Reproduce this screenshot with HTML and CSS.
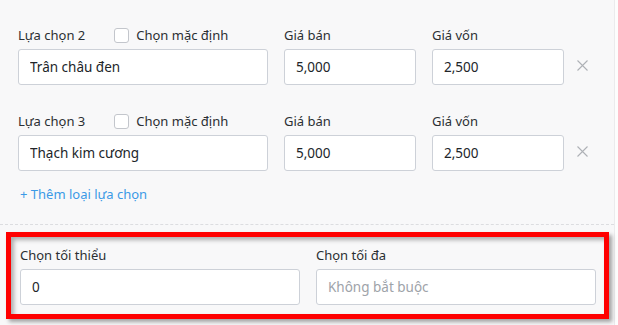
FILE: index.html
```html
<!DOCTYPE html>
<html lang="vi">
<head>
  <meta charset="UTF-8" />
  <meta name="viewport" content="width=device-width, initial-scale=1.0"/>
  <title>Lựa chọn</title>
  <link rel="stylesheet" href="styles.css">
</head>
<body>
  <div class="panel">

    <div class="option-row">
      <div class="field name-field">
        <div class="label-line">
          <label>Lựa chọn 2</label>
          <label class="check"><span class="box"></span>Chọn mặc định</label>
        </div>
        <input type="text" value="Trân châu đen" />
      </div>
      <div class="field">
        <div class="label-line"><label>Giá bán</label></div>
        <input type="text" value="5,000" />
      </div>
      <div class="field">
        <div class="label-line"><label>Giá vốn</label></div>
        <input type="text" value="2,500" />
      </div>
      <button class="remove" title="Xoá">
        <svg width="11" height="11" viewBox="0 0 11 11"><path d="M0.5 0.5 L10.5 10.5 M10.5 0.5 L0.5 10.5" stroke="#aeb1b6" stroke-width="1.1" fill="none"/></svg>
      </button>
    </div>

    <div class="option-row">
      <div class="field name-field">
        <div class="label-line">
          <label>Lựa chọn 3</label>
          <label class="check"><span class="box"></span>Chọn mặc định</label>
        </div>
        <input type="text" value="Thạch kim cương" />
      </div>
      <div class="field">
        <div class="label-line"><label>Giá bán</label></div>
        <input type="text" value="5,000" />
      </div>
      <div class="field">
        <div class="label-line"><label>Giá vốn</label></div>
        <input type="text" value="2,500" />
      </div>
      <button class="remove" title="Xoá">
        <svg width="11" height="11" viewBox="0 0 11 11"><path d="M0.5 0.5 L10.5 10.5 M10.5 0.5 L0.5 10.5" stroke="#aeb1b6" stroke-width="1.1" fill="none"/></svg>
      </button>
    </div>

    <a class="add-link" href="#">+ Thêm loại lựa chọn</a>

    <hr class="divider" />

    <div class="limits">
      <div class="field">
        <div class="label-line"><label>Chọn tối thiểu</label></div>
        <input type="text" value="0" />
      </div>
      <div class="field">
        <div class="label-line"><label>Chọn tối đa</label></div>
        <input type="text" placeholder="Không bắt buộc" />
      </div>
    </div>

  </div>
</body>
</html>
```

FILE: styles.css
```css
body {
  margin: 0;
  background: #fdfdfd;
  font-family: "Noto Sans", "Open Sans", sans-serif;
  font-size: 13px;
  color: #212529;
}

.panel {
  width: 615px;
  height: 325px;
  box-sizing: border-box;
  background: #f8f8f9;
  border-right: 1px solid #ebebed;
  padding-top: 25px;
}

.option-row {
  display: flex;
  align-items: flex-start;
  gap: 16px;
  padding-left: 18px;
  margin-bottom: 26px;
}

.field {
  display: flex;
  flex-direction: column;
  width: 132px;
}

.name-field {
  width: 250px;
}

.label-line {
  display: flex;
  align-items: center;
  height: 20px;
  margin-bottom: 4px;
  white-space: nowrap;
}

.label-line label {
  color: #2b2f33;
}

.check {
  display: flex;
  align-items: center;
  margin-left: 29px;
}

.box {
  display: inline-block;
  width: 13px;
  height: 13px;
  border: 1px solid #c3c6cc;
  border-radius: 3px;
  background: #fff;
  margin-right: 7px;
}

input {
  height: 36px;
  box-sizing: border-box;
  border: 1px solid #cdd1d8;
  border-radius: 3px;
  background: #fff;
  padding: 0 11px;
  font-family: inherit;
  font-size: 13.5px;
  color: #212529;
  width: 100%;
  outline: none;
}

input::placeholder {
  color: #9ea3a9;
}

.remove {
  border: none;
  background: none;
  padding: 0;
  margin: 35px 0 0 -3px;
  width: 11px;
  height: 11px;
  display: flex;
  cursor: pointer;
}

.add-link {
  display: block;
  width: max-content;
  margin: -13px 0 0 20px;
  line-height: 20px;
  color: #3b9ae6;
  text-decoration: none;
}

.divider {
  border: none;
  border-top: 1px dashed #dcdde0;
  margin: 20px 0 0 0;
}

.limits {
  display: flex;
  gap: 16px;
  width: 603px;
  box-sizing: border-box;
  margin: 7px 0 0 6px;
  padding: 8px 7px 9px 9px;
  border: 5px solid #ff0000;
  box-shadow: 3px 3px 4px rgba(0, 0, 0, 0.35), inset 3px 3px 4px rgba(0, 0, 0, 0.3);
}

.limits .field {
  width: 280px;
}
```
